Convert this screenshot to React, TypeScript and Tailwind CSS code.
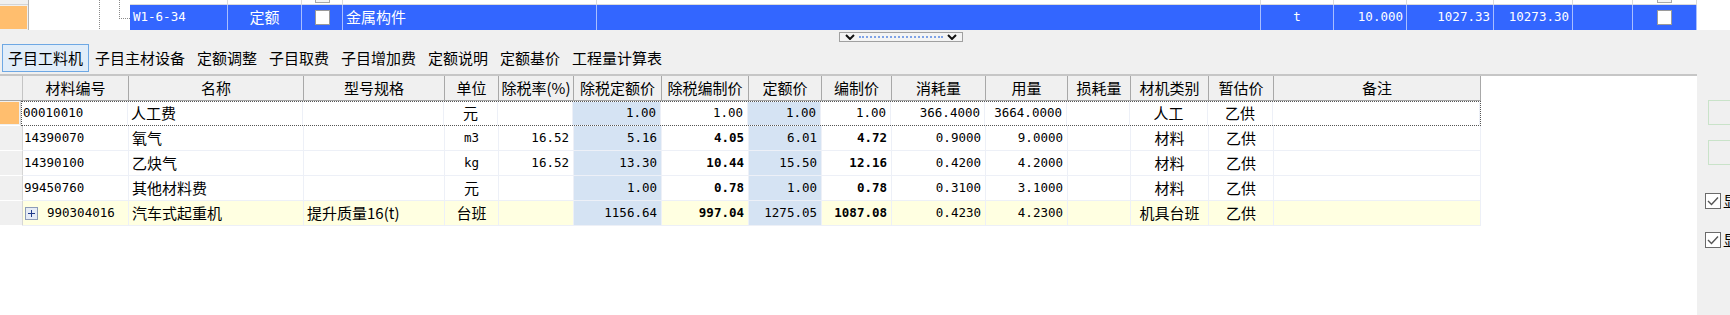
import clsx from "clsx";

const CJK = "font-['Noto_Sans_CJK_SC',sans-serif] text-[15px]";
const MONO = "font-['DejaVu_Sans_Mono','Noto_Sans_CJK_SC',monospace] text-[12.5px]";
const hasCjk = (s: string) => /[\u4e00-\u9fff]/.test(s);

interface Col {
  label: string;
  w: number;
  align: "left" | "center" | "right";
  blue?: boolean;
  bold?: boolean;
}

const cols: Col[] = [
  { label: "材料编号", w: 106, align: "left" },
  { label: "名称", w: 175, align: "left" },
  { label: "型号规格", w: 141, align: "left" },
  { label: "单位", w: 54, align: "center" },
  { label: "除税率(%)", w: 75, align: "right" },
  { label: "除税定额价", w: 88, align: "right", blue: true },
  { label: "除税编制价", w: 87, align: "right", bold: true },
  { label: "定额价", w: 73, align: "right", blue: true },
  { label: "编制价", w: 70, align: "right", bold: true },
  { label: "消耗量", w: 94, align: "right" },
  { label: "用量", w: 82, align: "right" },
  { label: "损耗量", w: 63, align: "right" },
  { label: "材机类别", w: 78, align: "center" },
  { label: "暂估价", w: 65, align: "center" },
  { label: "备注", w: 207, align: "left" },
];

interface Row {
  cells: string[];
  bold?: boolean;
  yellow?: boolean;
  current?: boolean;
  expand?: boolean;
}

const rows: Row[] = [
  {
    cells: ["00010010", "人工费", "", "元", "", "1.00", "1.00", "1.00", "1.00", "366.4000", "3664.0000", "", "人工", "乙供", ""],
    current: true,
  },
  {
    cells: ["14390070", "氧气", "", "m3", "16.52", "5.16", "4.05", "6.01", "4.72", "0.9000", "9.0000", "", "材料", "乙供", ""],
    bold: true,
  },
  {
    cells: ["14390100", "乙炔气", "", "kg", "16.52", "13.30", "10.44", "15.50", "12.16", "0.4200", "4.2000", "", "材料", "乙供", ""],
    bold: true,
  },
  {
    cells: ["99450760", "其他材料费", "", "元", "", "1.00", "0.78", "1.00", "0.78", "0.3100", "3.1000", "", "材料", "乙供", ""],
    bold: true,
  },
  {
    cells: ["990304016", "汽车式起重机", "提升质量16(t)", "台班", "", "1156.64", "997.04", "1275.05", "1087.08", "0.4230", "4.2300", "", "机具台班", "乙供", ""],
    bold: true,
    yellow: true,
    expand: true,
  },
];

const tabs = ["子目工料机", "子目主材设备", "定额调整", "子目取费", "子目增加费", "定额说明", "定额基价", "工程量计算表"];

// widths of the upper grid, after the row header and tree columns
const topCols = [98, 74, 41, 254, 664, 73, 73, 87, 79, 60, 64];

function Box({ className }: { className?: string }) {
  return <div className={clsx("w-[15px] h-[15px] bg-white border border-[#9a9a9a]", className)} />;
}

function TopGrid() {
  const blue: (string | JSX.Element)[] = [
    "W1-6-34",
    "定额",
    <Box key="b1" />,
    "金属构件",
    "",
    "t",
    "10.000",
    "1027.33",
    "10273.30",
    "",
    <Box key="b2" />,
  ];
  const aligns = ["left", "center", "center", "left", "left", "center", "right", "right", "right", "left", "center"];

  return (
    <div className="flex h-[30px] bg-white">
      <div className="w-[29px] flex flex-col border-r border-[#b4b4b4] bg-[#f0f0f0]">
        <div className="h-[5px] border-b border-[#d4d4d4]" />
        <div className="flex-1 py-[1px]">
          <div className="w-[27px] h-full bg-[#ffbe6e]" />
        </div>
      </div>
      <div className="w-[101px] h-full">
        <svg width="101" height="30">
          <line x1="70.5" y1="0" x2="70.5" y2="30" stroke="#8a8a8a" strokeDasharray="1 1" />
          <line x1="90.5" y1="0" x2="90.5" y2="18" stroke="#8a8a8a" strokeDasharray="1 1" />
          <line x1="90" y1="18.5" x2="101" y2="18.5" stroke="#8a8a8a" strokeDasharray="1 1" />
        </svg>
      </div>
      <div className="flex flex-col">
        <div className="flex h-[5px]">
          {topCols.map((w, i) => (
            <div
              key={i}
              style={{ width: w }}
              className="h-full border-r border-b border-[#dadada] flex justify-center items-end overflow-hidden"
            >
              {(i === 2 || i === 10) && <div className="w-[15px] h-[15px] border border-[#a8a8a8] bg-[#f4f4f4] mb-[1px] shrink-0" />}
            </div>
          ))}
        </div>
        <div className="flex h-[25px] bg-[#3366ff] text-white">
          {topCols.map((w, i) => {
            const v = blue[i];
            const isText = typeof v === "string";
            return (
              <div
                key={i}
                style={{ width: w }}
                className={clsx(
                  "h-full border-r border-[#a9bfff] flex items-center overflow-hidden whitespace-nowrap",
                  aligns[i] === "left" && "justify-start pl-[3px]",
                  aligns[i] === "center" && "justify-center",
                  aligns[i] === "right" && "justify-end pr-[3px]",
                  isText && (hasCjk(v as string) ? CJK : MONO)
                )}
              >
                {v}
              </div>
            );
          })}
        </div>
      </div>
    </div>
  );
}

function Splitter() {
  const chev = (
    <svg width="10" height="6" viewBox="0 0 10 6">
      <path d="M1 1 L5 5 L9 1" fill="none" stroke="#111" strokeWidth="2" />
    </svg>
  );
  return (
    <div className="w-[124px] h-[10px] border border-[#a0a0a0] bg-[#f4f4f4] flex items-center px-[5px] gap-[4px]">
      {chev}
      <div className="flex-1 border-t-2 border-dotted border-[#7fa3e6]" />
      {chev}
    </div>
  );
}

function Tabs() {
  return (
    <div className={clsx("h-[30px] flex items-start pl-[2px]", CJK)}>
      {tabs.map((t, i) => (
        <div
          key={t}
          className={clsx(
            "h-[28px] px-[5px] border flex items-center whitespace-nowrap",
            i === 0 ? "border-[#6ea8e4] bg-[#e1edf9]" : "border-transparent"
          )}
        >
          {t}
        </div>
      ))}
    </div>
  );
}

function Table() {
  return (
    <div className="flex flex-col w-[1481px]">
      <div className={clsx("flex h-[25px] bg-[#f0f0f0] border-b border-[#a4a4a4]", CJK)}>
        <div className="w-[23px] h-full border-r border-[#c4c4c4]" />
        {cols.map((c) => (
          <div
            key={c.label}
            style={{ width: c.w }}
            className="h-full border-r border-[#a8a8a8] flex items-center justify-center whitespace-nowrap overflow-hidden"
          >
            {c.label}
          </div>
        ))}
      </div>
      {rows.map((r, ri) => (
        <div key={ri} className="flex h-[25px]">
          <div className="w-[23px] h-full bg-[#f0f0f0] border-r border-b border-[#d6d6d6] border-b-white py-[1px] pr-[1px]">
            {r.current && <div className="w-full h-full bg-[#ffbe6e]" />}
          </div>
          <div className={clsx("flex h-full", r.current && "border border-dotted border-[#555]")}>
            {cols.map((c, ci) => {
              const v = r.cells[ci];
              return (
                <div
                  key={ci}
                  style={{ width: c.w }}
                  className={clsx(
                    "h-full flex items-center whitespace-nowrap overflow-hidden border-r border-[#edf0f7]",
                    !r.current && "border-b",
                    c.blue ? "bg-[#d5e3f3]" : r.yellow ? "bg-[#ffffe1]" : "bg-white",
                    c.align === "left" && (ci === 0 ? "pl-[1px]" : "pl-[3px]"),
                    c.align === "center" && "justify-center",
                    c.align === "right" && "justify-end pr-[4px]",
                    hasCjk(v) ? CJK : MONO,
                    c.bold && r.bold && "font-bold"
                  )}
                >
                  {ci === 0 && r.expand && (
                    <div className="w-[13px] h-[13px] ml-[1px] mr-[9px] border border-[#8c9bb8] bg-[#e6ecf6] flex items-center justify-center shrink-0">
                      <svg width="7" height="7" viewBox="0 0 7 7">
                        <path d="M0 3.5 H7 M3.5 0 V7" stroke="#1f3a8a" strokeWidth="1" />
                      </svg>
                    </div>
                  )}
                  {v}
                </div>
              );
            })}
          </div>
        </div>
      ))}
    </div>
  );
}

function Check({ className }: { className?: string }) {
  return (
    <div className={clsx("flex items-center w-max", className)}>
      <div className="w-[16px] h-[16px] border border-[#6a6a6a] bg-white flex items-center justify-center">
        <svg width="12" height="10" viewBox="0 0 12 10">
          <path d="M1 5 L4.5 8.5 L11 1.5" fill="none" stroke="#555" strokeWidth="1.4" />
        </svg>
      </div>
      <span className={clsx("ml-[2px]", CJK)}>显示</span>
    </div>
  );
}

function RightPanel() {
  return (
    <div className="w-[33px] h-full bg-[#f0f0f0] flex flex-col overflow-hidden">
      <div className="ml-[11px] mt-[26px] w-[40px] h-[25px] shrink-0 border border-[#c9e3c9]" />
      <div className="ml-[11px] mt-[15px] w-[40px] h-[25px] shrink-0 border border-[#c9e3c9]" />
      <Check className="ml-[8px] mt-[25px]" />
      <Check className="ml-[8px] mt-[16px]" />
    </div>
  );
}

export default function App() {
  return (
    <div className="w-[1730px] h-[315px] overflow-hidden bg-[#f0f0f0] text-black">
      <TopGrid />
      <div className="h-[14px] flex pl-[839px] pt-[2px]">
        <Splitter />
      </div>
      <Tabs />
      <div className="flex h-[241px]">
        <div className="w-[1697px] h-full bg-white border-t-2 border-[#c6c6c6]">
          <Table />
        </div>
        <RightPanel />
      </div>
    </div>
  );
}
